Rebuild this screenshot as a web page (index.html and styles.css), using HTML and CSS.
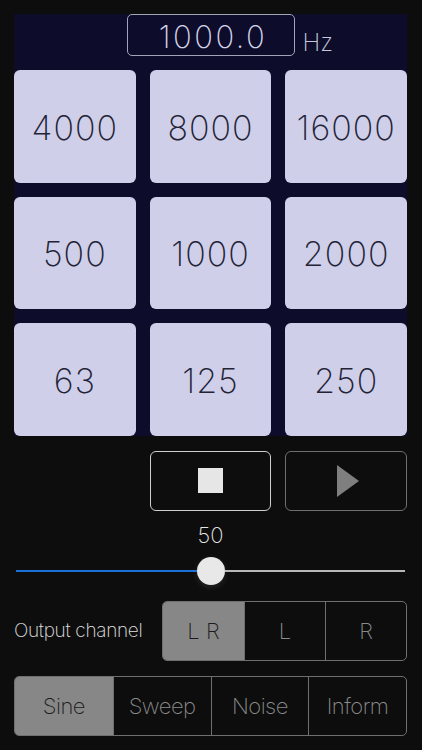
FILE: index.html
```html
<!DOCTYPE html>
<html lang="en">
<head>
<meta charset="utf-8">
<title>Tone Generator</title>
<link rel="stylesheet" href="styles.css">
</head>
<body>
<div class="app">
  <div class="panel">
    <div class="freq-row">
      <div></div>
      <div class="freq-box">1000.0</div>
      <div class="unit">Hz</div>
    </div>
    <div class="keys">
      <div class="key">4000</div>
      <div class="key">8000</div>
      <div class="key">16000</div>
      <div class="key">500</div>
      <div class="key">1000</div>
      <div class="key">2000</div>
      <div class="key">63</div>
      <div class="key">125</div>
      <div class="key">250</div>
    </div>
  </div>

  <div class="transport">
    <div></div>
    <div class="tbtn stop"><span class="stop-icon"></span></div>
    <div class="tbtn play">
      <svg width="24" height="34" viewBox="0 0 24 34"><polygon points="1,1 23,17 1,33" fill="#7f7f7f"/></svg>
    </div>
  </div>

  <div class="vol-value">50</div>
  <div class="slider">
    <div class="track fill"></div>
    <div class="thumb"></div>
    <div class="track rest"></div>
  </div>

  <div class="channel-row">
    <div class="channel-label">Output channel</div>
    <div class="seg seg3">
      <div class="seg-item active">L R</div>
      <div class="seg-item">L</div>
      <div class="seg-item">R</div>
    </div>
  </div>

  <div class="seg seg4 mode-row">
    <div class="seg-item active">Sine</div>
    <div class="seg-item">Sweep</div>
    <div class="seg-item">Noise</div>
    <div class="seg-item">Inform</div>
  </div>
</div>
</body>
</html>
```

FILE: styles.css
```css
html, body {
  margin: 0;
  padding: 0;
  background: #0d0d0d;
  font-family: "Inter", "Roboto", "Liberation Sans", sans-serif;
  font-weight: 200;
}

.app {
  width: 393px;
  margin-left: 14px;
  padding-top: 14px;
}

.panel {
  background: #0d0c2a;
}

.freq-row {
  display: grid;
  grid-template-columns: 1fr 168px 1fr;
  align-items: end;
}

.freq-box {
  box-sizing: border-box;
  height: 42px;
  border: 1px solid #a4a4b8;
  border-radius: 5px;
  color: #d2d2e8;
  font-size: 31px;
  line-height: 35px;
  padding-top: 4px;
  padding-left: 5px;
  text-align: center;
  letter-spacing: 2.5px;
}

.unit {
  color: #c8c8dc;
  font-size: 24px;
  line-height: 24px;
  padding-left: 8px;
  padding-bottom: 1px;
}

.keys {
  margin-top: 14px;
  display: grid;
  grid-template-columns: repeat(3, 1fr);
  grid-auto-rows: 112.5px;
  gap: 14px;
}

.key {
  background: #cfcfe9;
  border-radius: 6px;
  display: flex;
  align-items: center;
  justify-content: center;
  color: #232336;
  font-size: 34px;
  letter-spacing: 1px;
  padding-top: 2px;
  box-sizing: border-box;
}

.transport {
  margin-top: 15px;
  display: grid;
  grid-template-columns: repeat(3, 1fr);
  gap: 14px;
  height: 60px;
}

.tbtn {
  box-sizing: border-box;
  border-radius: 6px;
  display: flex;
  align-items: center;
  justify-content: center;
}

.stop {
  border: 1px solid #cfcfcf;
}

.stop-icon {
  width: 25px;
  height: 25px;
  background: #e6e6e6;
}

.play {
  border: 1px solid #6f6f6f;
  padding-left: 4px;
}

.vol-value {
  margin-top: 12px;
  text-align: center;
  color: #e6e6e6;
  font-size: 22px;
  line-height: 24px;
}

.slider {
  margin: 10px 2px 0 2px;
  height: 28px;
  display: flex;
  align-items: center;
}

.track {
  height: 2px;
}

.track.fill {
  flex: 0 0 181px;
  background: #1d6fd8;
}

.track.rest {
  flex: 1;
  background: #b8b8b8;
}

.thumb {
  width: 28px;
  height: 28px;
  border-radius: 50%;
  background: #e8e8e8;
  box-shadow: 0 2px 6px rgba(255, 255, 255, 0.12), 0 0 2px rgba(0, 0, 0, 0.4);
}

.channel-row {
  margin-top: 16px;
  display: flex;
  align-items: center;
  justify-content: space-between;
  height: 60px;
}

.channel-label {
  color: #e0e0e0;
  font-size: 19px;
  letter-spacing: -0.3px;
}

.seg {
  box-sizing: border-box;
  display: grid;
  border: 1px solid #6f6f6f;
  border-radius: 5px;
  overflow: hidden;
  height: 60px;
}

.seg3 {
  width: 245px;
  grid-template-columns: repeat(3, 1fr);
}

.seg4 {
  grid-template-columns: repeat(4, 1fr);
}

.mode-row {
  margin-top: 15px;
}

.seg-item {
  display: flex;
  align-items: center;
  justify-content: center;
  color: #8a8a8a;
  font-size: 22px;
  letter-spacing: -0.5px;
  border-left: 1px solid #6f6f6f;
}

.seg-item:first-child {
  border-left: none;
}

.seg-item.active {
  background: #878787;
  color: #1c1c1c;
}

.seg3 .seg-item {
  font-size: 22px;
  letter-spacing: 0;
}
```
